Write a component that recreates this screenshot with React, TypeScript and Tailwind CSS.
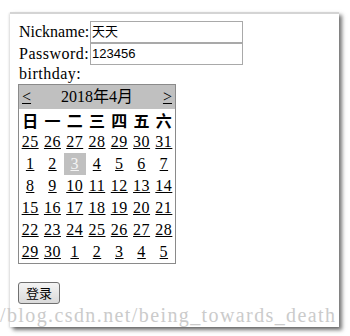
import React from "react";

const serif = { fontFamily: '"Liberation Serif", "Noto Sans CJK SC", serif' };

const weeks: number[][] = [
  [25, 26, 27, 28, 29, 30, 31],
  [1, 2, 3, 4, 5, 6, 7],
  [8, 9, 10, 11, 12, 13, 14],
  [15, 16, 17, 18, 19, 20, 21],
  [22, 23, 24, 25, 26, 27, 28],
  [29, 30, 1, 2, 3, 4, 5],
];

const days = ["日", "一", "二", "三", "四", "五", "六"];

export default function App() {
  return (
    <div className="relative w-[350px] h-[336px] bg-white overflow-hidden">
      <div className="ml-[10px] mt-[12px] w-[329px] h-[315px] bg-white border-t-2 border-[#d4d4d4] shadow-[3px_3px_4px_rgba(0,0,0,0.55),-1px_1px_2px_rgba(0,0,0,0.12)] pl-[8px] pt-[7px]">
        <div className="flex items-center h-[22px]">
          <span className="w-[72px] pl-[1px] text-[16px] text-black leading-[22px]" style={serif}>
            Nickname:
          </span>
          <div className="w-[153px] h-[22px] border border-[#a9a9a9] flex items-center pl-[1px] text-[13px] text-black" style={{ fontFamily: '"Liberation Sans", "Noto Sans CJK SC", sans-serif' }}>
            天天
          </div>
        </div>
        <div className="flex items-center h-[22px]">
          <span className="w-[72px] pl-[1px] text-[16px] tracking-[0.5px] text-black leading-[22px]" style={serif}>
            Password:
          </span>
          <div className="w-[153px] h-[22px] border border-[#a9a9a9] flex items-center pl-[1px] text-[13px] text-black" style={{ fontFamily: '"Liberation Sans", "Noto Sans CJK SC", sans-serif' }}>
            123456
          </div>
        </div>
        <div className="h-[19px] pl-[1px] text-[16px] tracking-[0.5px] leading-[17px] text-black" style={serif}>
          birthday:
        </div>
        <div className="w-[158px] border border-[#8a8a8a]">
          <div className="h-[24px] bg-[#c0c0c0] flex items-center justify-between px-[3px] text-[16px] text-black" style={serif}>
            <span className="underline w-[10px]">&lt;</span>
            <span>2018年4月</span>
            <span className="underline w-[10px] text-right">&gt;</span>
          </div>
          <div className="grid grid-cols-7 w-[156px]">
            {days.map((d) => (
              <div
                key={d}
                className="h-[22px] flex items-center justify-center text-[16px] font-bold text-black"
                style={{ fontFamily: '"Noto Sans CJK SC", sans-serif' }}
              >
                {d}
              </div>
            ))}
            {weeks.flat().map((n, i) => {
              const sel = i === 9;
              return (
                <div
                  key={i}
                  className={`h-[22px] flex items-center justify-center ${sel ? "bg-[#c0c0c0] text-[#f4f4f4]" : "text-black"}`}
                >
                  <span className="underline text-[16px] tracking-[0.5px] leading-[18px]" style={serif}>
                    {n}
                  </span>
                </div>
              );
            })}
          </div>
        </div>
        <div className="mt-[18px]">
          <button
            className="w-[42px] h-[22px] border border-[#707070] rounded-[3px] bg-gradient-to-b from-[#f4f4f4] to-[#dadada] text-[13px] text-black flex items-center justify-center"
            style={{ fontFamily: '"Noto Sans CJK SC", sans-serif' }}
          >
            登录
          </button>
        </div>
      </div>
      <div
        className="absolute left-[0px] top-[303px] text-[20px] tracking-[1.4px] leading-[24px] text-[#cbcbcb] whitespace-nowrap"
        style={{ fontFamily: '"Liberation Serif", serif' }}
      >
        /blog.csdn.net/being_towards_death
      </div>
    </div>
  );
}
